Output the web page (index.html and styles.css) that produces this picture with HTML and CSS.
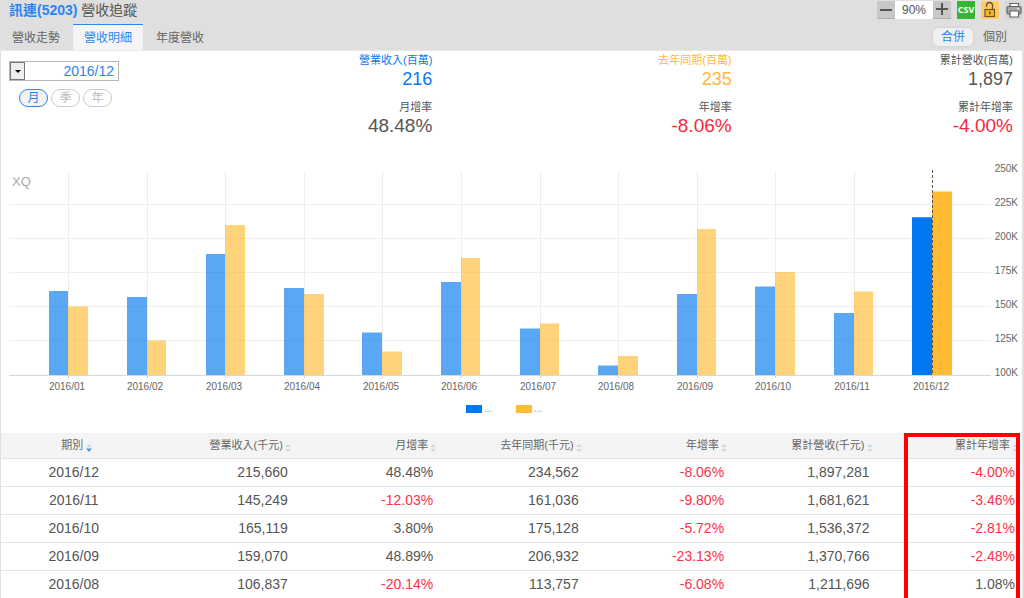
FILE: index.html
```html
<!DOCTYPE html>
<html lang="zh-Hant">
<head>
<meta charset="utf-8">
<title>訊連(5203) 營收追蹤</title>
<link rel="stylesheet" href="styles.css">
</head>
<body>
<header class="top">
  <div class="title-row">
    <h1 class="title"><strong>訊連(5203)</strong> 營收追蹤</h1>
    <div class="tools">
      <div class="zoomer">
        <button class="step" type="button" aria-label="縮小"><svg viewBox="0 0 18 18"><path d="M3 9h12"/></svg></button>
        <output class="percent">90%</output>
        <button class="step" type="button" aria-label="放大"><svg viewBox="0 0 18 18"><path d="M3 8h12M9 2v12"/></svg></button>
      </div>
      <button class="tool csv" type="button">CSV</button>
      <button class="tool lock" type="button" aria-label="鎖定"><svg viewBox="0 0 18 18"><path d="M5.500 6V4.500a2.500 2.500 0 0 1 6 0V8.500" fill="none" stroke="#6b5420" stroke-width="1.300"/><rect x="4" y="8.500" width="9.500" height="7" fill="#f5b82e" stroke="#6b5420" stroke-width="1.200"/><path d="M8.800 10.500v3" stroke="#6b5420" stroke-width="1.600"/></svg></button>
      <button class="tool print" type="button" aria-label="列印"><svg viewBox="0 0 18 18"><path d="M5 5.500V2.500h8.500v3" fill="#fff" stroke="#666" stroke-width="1.200"/><rect x="2" y="5.500" width="14" height="7.500" rx="1.500" fill="#a8a8a8" stroke="#666" stroke-width="1.200"/><path d="M5 10h8.500v6H5z" fill="#fff" stroke="#666" stroke-width="1.200"/><path d="M12 7.800h2" stroke="#fff"/></svg></button>
    </div>
  </div>
  <div class="nav-row">
    <nav class="tabs">
      <a class="tab" href="#trend">營收走勢</a>
      <a class="tab active" href="#detail" aria-current="page">營收明細</a>
      <a class="tab" href="#year">年度營收</a>
    </nav>
    <div class="scope">
      <button class="scope-btn on" type="button">合併</button>
      <button class="scope-btn" type="button">個別</button>
    </div>
  </div>
</header>
<main class="panel">
  <section class="summary">
    <form class="filters">
      <label class="picker"><span class="arrow"></span><select class="month" aria-label="期別"><option>2016/12</option></select></label>
      <div class="periods">
        <button class="pill on" type="button">月</button>
        <button class="pill" type="button">季</button>
        <button class="pill" type="button">年</button>
      </div>
    </form>
    <dl class="stat revenue"><dt class="tint">營業收入(百萬)</dt><dd class="amount tint">216</dd><dt>月增率</dt><dd class="rate">48.48%</dd></dl>
    <dl class="stat previous"><dt class="tint">去年同期(百萬)</dt><dd class="amount tint">235</dd><dt>年增率</dt><dd class="rate down">-8.06%</dd></dl>
    <dl class="stat"><dt>累計營收(百萬)</dt><dd class="amount">1,897</dd><dt>累計年增率</dt><dd class="rate down">-4.00%</dd></dl>
  </section>
  <svg class="chart" viewBox="1 160 1021 273" role="img" aria-label="每月營收與去年同期">
    <path class="grid" d="M9 204.500H991M9 238.500H991M9 272.500H991M9 306.500H991M9 340.500H991M68.500 171V375M147.500 171V375M225.500 171V375M304.500 171V375M382.500 171V375M461.500 171V375M540.500 171V375M618.500 171V375M697.500 171V375M775.500 171V375M854.500 171V375"/>
    <g class="bars blue">
      <path d="M49 291h19v84h-19zM127 297h20v78h-20zM206 254h19v121h-19zM284 288h20v87h-20zM362 332.500h20v42.500h-20zM441 282h20v93h-20zM520 328.500h20v46.500h-20zM598 365.500h20v9.500h-20zM677 294h20v81h-20zM755 286.500h20v88.500h-20zM834 313h20v62h-20z"/>
    </g>
    <g class="bars gold">
      <path d="M68 306.500h20v68.500h-20zM147 340.500h19v34.500h-19zM225 225h20v150h-20zM304 294h20v81h-20zM382 351.500h20v23.500h-20zM461 258h19v117h-19zM540 323.500h19v51.500h-19zM618 356h20v19h-20zM697 229h19v146h-19zM775 272h20v103h-20zM854 291.500h19v83.500h-19z"/>
    </g>
    <path class="blue" d="M912 217.500h21v157.500h-21z"/>
    <path class="gold" d="M932 191.500h20v183.500h-20z"/>
    <path class="blue" d="M912 217.500h20v157.500h-20z"/>
    <path class="cursor" d="M932.500 170V375"/>
    <path class="axis" d="M9 375.500H991M68.500 375v3M147.500 375v3M225.500 375v3M304.500 375v3M382.500 375v3M461.500 375v3M540.500 375v3M618.500 375v3M697.500 375v3M775.500 375v3M854.500 375v3M932.500 375v3"/>
    <text class="mark" x="12" y="186">XQ</text>
    <g class="months">
      <text x="67" y="390">2016/01</text><text x="145" y="390">2016/02</text><text x="224" y="390">2016/03</text><text x="302" y="390">2016/04</text><text x="381" y="390">2016/05</text><text x="459" y="390">2016/06</text><text x="538" y="390">2016/07</text><text x="616" y="390">2016/08</text><text x="695" y="390">2016/09</text><text x="773" y="390">2016/10</text><text x="852" y="390">2016/11</text><text x="931" y="390">2016/12</text>
    </g>
    <g class="scale">
      <text x="1018" y="172">250K</text><text x="1018" y="206">225K</text><text x="1018" y="240">200K</text><text x="1018" y="274">175K</text><text x="1018" y="308">150K</text><text x="1018" y="342">125K</text><text x="1018" y="376">100K</text>
    </g>
    <path class="blue" d="M466 405h16v8h-16z"/><path class="gold" d="M516 405h16v8h-16z"/>
    <text class="legend" x="484" y="412">...</text><text class="legend" x="534" y="412">...</text>
  </svg>
  <div class="table-wrap">
    <table class="data">
      <thead><tr>
        <th>期別<svg class="sort active" viewBox="0 0 6 8"><path d="M0 3l3-3 3 3z"/><path class="desc" d="M0 4.500h6l-3 3.500z"/></svg></th>
        <th>營業收入(千元)<svg class="sort" viewBox="0 0 6 8"><path d="M0 3l3-3 3 3zM0 5h6l-3 3z"/></svg></th>
        <th>月增率<svg class="sort" viewBox="0 0 6 8"><path d="M0 3l3-3 3 3zM0 5h6l-3 3z"/></svg></th>
        <th>去年同期(千元)<svg class="sort" viewBox="0 0 6 8"><path d="M0 3l3-3 3 3zM0 5h6l-3 3z"/></svg></th>
        <th>年增率<svg class="sort" viewBox="0 0 6 8"><path d="M0 3l3-3 3 3zM0 5h6l-3 3z"/></svg></th>
        <th>累計營收(千元)<svg class="sort" viewBox="0 0 6 8"><path d="M0 3l3-3 3 3zM0 5h6l-3 3z"/></svg></th>
        <th>累計年增率<svg class="sort" viewBox="0 0 6 8"><path d="M0 3l3-3 3 3zM0 5h6l-3 3z"/></svg></th>
      </tr></thead>
      <tbody>
        <tr><td>2016/12</td><td>215,660</td><td>48.48%</td><td>234,562</td><td class="down">-8.06%</td><td>1,897,281</td><td class="down">-4.00%</td></tr>
        <tr><td>2016/11</td><td>145,249</td><td class="down">-12.03%</td><td>161,036</td><td class="down">-9.80%</td><td>1,681,621</td><td class="down">-3.46%</td></tr>
        <tr><td>2016/10</td><td>165,119</td><td>3.80%</td><td>175,128</td><td class="down">-5.72%</td><td>1,536,372</td><td class="down">-2.81%</td></tr>
        <tr><td>2016/09</td><td>159,070</td><td>48.89%</td><td>206,932</td><td class="down">-23.13%</td><td>1,370,766</td><td class="down">-2.48%</td></tr>
        <tr><td>2016/08</td><td>106,837</td><td class="down">-20.14%</td><td>113,757</td><td class="down">-6.08%</td><td>1,211,696</td><td>1.08%</td></tr>
      </tbody>
    </table>
    <div class="highlight"></div>
  </div>
</main>
</body>
</html>
```
FILE: styles.css
```css
* { box-sizing: border-box; }
body { margin: 0; background: #fff; color: #555; font-family: "Liberation Sans", "Noto Sans CJK TC", sans-serif; font-size: 12px; overflow-x: hidden; }
button, select { font: inherit; color: inherit; margin: 0; padding: 0; border: 0; background: none; }
.top { background: #dfdfdf; border-bottom: 1px solid #e8e8e8; }
.title-row { display: flex; justify-content: space-between; height: 24px; padding: 0 1px 0 9px; }
.title { margin: 0; font-size: 14px; font-weight: 400; line-height: 20px; }
.title strong { color: #2a86f0; }
.tools { display: flex; gap: 6px; padding-top: 1px; }
.zoomer { display: flex; }
.step { width: 18px; height: 18px; background: #c8c8c8; border-bottom: 1px solid #b0b0b0; }
.step svg, .tool svg { display: block; width: 18px; height: 18px; }
.step path { stroke: #555; stroke-width: 2; fill: none; }
.percent { width: 38px; height: 18px; background: #fff; text-align: center; line-height: 18px; }
.tool { width: 18px; height: 18px; border-radius: 1px; }
.csv { background: #35b535; color: #fff; font: bold 9px/18px "Open Sans", sans-serif; }
.lock { background: #ffcc66; }
.print { background: #d6d6d6; }
.nav-row { display: flex; justify-content: space-between; align-items: flex-end; height: 26px; }
.tabs { display: flex; gap: 2px; padding-left: 1px; }
.tab { height: 26px; padding: 0 11px; border-top: 1px solid transparent; color: #666; line-height: 26px; text-decoration: none; }
.tab.active { background: #f5f5f5; border-color: #2a86f0; color: #2a86f0; }
.scope { display: flex; gap: 2px; padding: 0 9px 4px 0; }
.scope-btn { width: 40px; height: 18px; border-radius: 5px; line-height: 18px; color: #666; }
.scope-btn.on { background: #f0f0f0; color: #2a86f0; box-shadow: 0 0 2px #bbb; }
.panel { border-left: 1px solid #e0e0e0; border-right: 2px solid #e0e0e0; }
.summary { display: grid; grid-template-columns: 132px 299fr 299fr 281fr; height: 109px; padding-right: 9px; }
.filters { padding: 10px 0 0 8px; }
.picker { display: flex; width: 110px; height: 20px; border: 1px solid #b5b5c0; }
.arrow { flex: none; width: 15px; border: 1px solid #777; background: #eee; display: grid; place-items: center; }
.arrow::before { content: ""; border: 3px solid transparent; border-top-color: #000; border-bottom: 0; }
.month { flex: 1; appearance: none; color: #2a86f0; font-size: 14px; text-align: right; text-align-last: right; padding-right: 4px; }
.periods { display: flex; gap: 3px; padding: 8px 0 0 10px; }
.pill { width: 29px; height: 18px; border: 1px solid #ccc; border-radius: 9px; color: #bbb; line-height: 16px; }
.pill.on { background: #f3f3f3; border-color: #2a86f0; color: #2a86f0; }
.stat { margin: 0; text-align: right; color: #555; }
.stat dt { font-size: 11px; line-height: 18px; }
.stat dd { margin: 0; line-height: 20px; }
.amount { font-size: 18px; }
.rate { font-size: 19px; }
.stat .amount { margin-bottom: 9px; }
.revenue .tint { color: #0a78f0; }
.previous .tint { color: #ffb833; }
.stat .down { color: #f8283c; }
.chart { display: block; width: 100%; height: auto; }
.chart text { font-size: 10px; fill: #666; }
.chart .mark { font-size: 13px; fill: #aaa; }
.chart .legend { fill: #999; }
.grid { stroke: #eee; fill: none; }
.axis { stroke: #d8d8d8; fill: none; }
.bars { opacity: .65; }
.blue { fill: #0078f0; }
.gold { fill: #ffbb33; }
.cursor { stroke: #555; stroke-dasharray: 3 2; }
.months { text-anchor: middle; }
.scale { text-anchor: end; }
.table-wrap { position: relative; overflow: hidden; padding-right: 3px; }
.data { width: 100%; table-layout: fixed; border-collapse: collapse; }
.data th { height: 25px; padding: 0; background: #f4f4f4; border-bottom: 1px solid #e4e4e4; font-size: 11px; line-height: 16px; font-weight: 400; text-align: right; color: #666; white-space: nowrap; }
.data td { height: 28px; padding: 0 4px 0 0; border-bottom: 1px solid #e4e4e4; font-size: 14px; text-align: right; color: #555; }
.data td:first-child { padding: 0; text-align: center; }
.data th:first-child { padding-left: 7px; text-align: center; }
.data td.down { color: #fa3246; }
.sort { width: 6px; height: 8px; margin: 0 1px 0 2px; vertical-align: -3px; fill: #c5dcee; }
.sort.active { margin-left: 3px; }
.desc { fill: #4a9fe0; }
.highlight { position: absolute; top: 0; bottom: -10px; right: 2px; width: 116px; border: 4px solid #f00; border-bottom: 0; pointer-events: none; }
```
